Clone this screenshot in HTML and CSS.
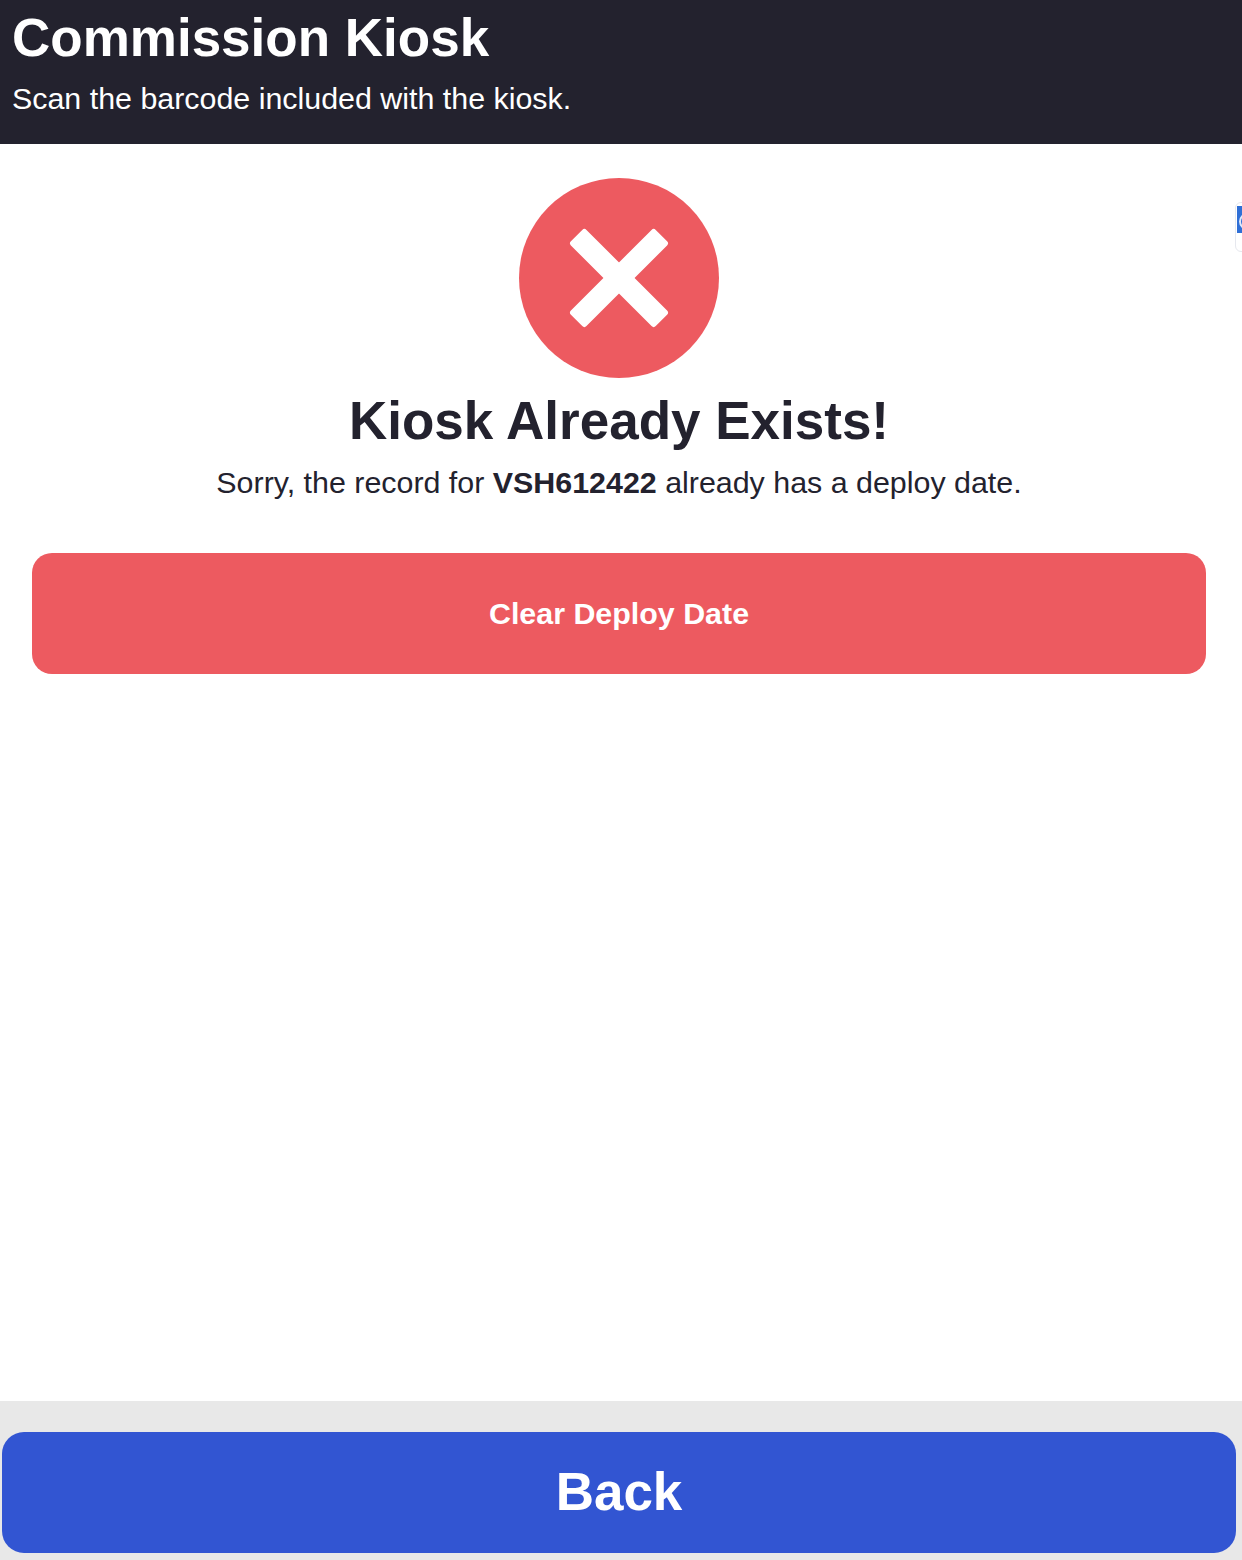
FILE: index.html
```html
<!DOCTYPE html>
<html lang="en">
<head>
    <meta charset="UTF-8">
    <title>Commission Kiosk</title>
    <link rel="stylesheet" href="styles.css">
</head>
<body>
    <header class="page-header">
        <h1>Commission Kiosk</h1>
        <p>Scan the barcode included with the kiosk.</p>
    </header>

    <main class="content">
        <svg class="status-icon" viewBox="0 0 200 200" width="200" height="200">
            <circle cx="100" cy="100" r="100" fill="#ed5a60"/>
            <rect x="89" y="40" width="22" height="120" rx="3" fill="#fff" transform="rotate(45 100 100)"/>
            <rect x="89" y="40" width="22" height="120" rx="3" fill="#fff" transform="rotate(-45 100 100)"/>
        </svg>
        <h2>Kiosk Already Exists!</h2>
        <p class="message">Sorry, the record for <strong>VSH612422</strong> already has a deploy date.</p>
        <button type="button" class="clear-btn">Clear Deploy Date</button>
        <div class="edge-tab"><span></span></div>
    </main>

    <footer class="page-footer">
        <button type="button" class="back-btn">Back</button>
    </footer>
</body>
</html>
```

FILE: styles.css
```css
* {
    box-sizing: border-box;
}
html, body {
    margin: 0;
    height: 100%;
}
body {
    width: 1242px;
    height: 1560px;
    display: flex;
    flex-direction: column;
    overflow: hidden;
    font-family: "Liberation Sans", Arial, sans-serif;
    background-color: #fff;
    color: #23222e;
}
button {
    display: block;
    border: none;
    color: #fff;
    font-family: inherit;
    font-weight: bold;
    cursor: pointer;
}
.page-header {
    height: 144px;
    padding: 9px 12px 0;
    background-color: #23222e;
    color: #fff;
}
.page-header h1 {
    margin: 0;
    font-size: 53px;
    line-height: 58px;
}
.page-header p {
    margin: 13px 0 0;
    font-size: 30.4px;
    line-height: 36px;
}
.content {
    position: relative;
    flex: 1;
    display: flex;
    flex-direction: column;
    align-items: center;
    padding-top: 34px;
}
.status-icon {
    display: block;
    margin-right: 4px;
}
.content h2 {
    margin: 14px 4px 0 0;
    font-size: 53px;
    line-height: 58px;
}
.message {
    margin: 14px 4px 0 0;
    font-size: 30.4px;
    line-height: 36px;
}
.clear-btn {
    width: 1174px;
    height: 121px;
    margin: 53px 4px 0 0;
    padding-bottom: 2px;
    border-radius: 20px;
    background-color: #ed5a60;
    font-size: 30.4px;
}
.edge-tab {
    position: absolute;
    top: 58px;
    right: -8px;
    width: 15px;
    height: 50px;
    padding: 3px 0 0 1px;
    border: 1px solid #e6e8ee;
    border-radius: 6px;
}
.edge-tab span {
    display: block;
    height: 27px;
    padding: 7px 0 0 2px;
    background-color: #2f6fd6;
}
.edge-tab span::before {
    content: "";
    display: block;
    width: 13px;
    height: 13px;
    border: 2px solid #dfe9fa;
    border-radius: 50%;
}
.page-footer {
    height: 159px;
    padding: 31px 6px 7px 2px;
    background-color: #e8e8e8;
}
.back-btn {
    width: 100%;
    height: 121px;
    padding-bottom: 4px;
    border-radius: 22px;
    background-color: #3255d2;
    font-size: 53px;
}
```
